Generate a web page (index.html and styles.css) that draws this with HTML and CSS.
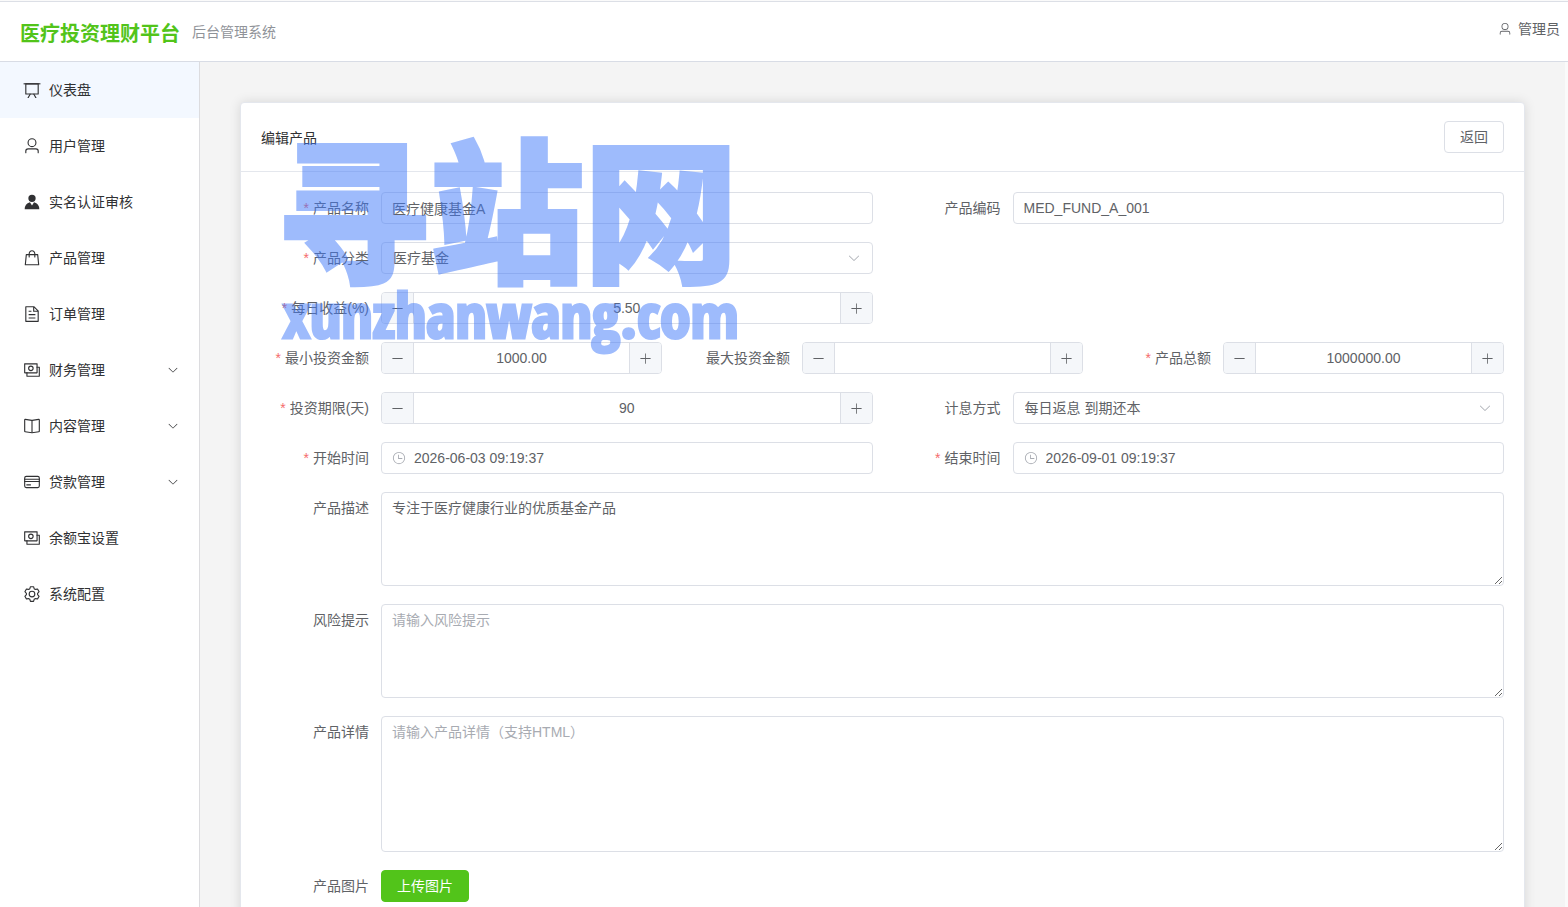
FILE: index.html
```html
<!DOCTYPE html>
<html lang="zh-CN">
<head>
    <meta charset="UTF-8">
    <meta name="viewport" content="width=device-width, initial-scale=1.0">
    <title>编辑产品</title>
    <link rel="stylesheet" href="styles.css">
</head>
<body>
    <!-- icon set -->
    <svg class="icon-defs" aria-hidden="true">
        <symbol id="i-board" viewBox="0 0 1024 1024"><path d="M32 128h960v64H32z"/><path d="M192 192v512h640V192zm-64-64h768v608a32 32 0 0 1-32 32H160a32 32 0 0 1-32-32z"/><path d="M322.176 960H248.32l144.64-250.56 55.424 32zm453.888 0h-73.856L576 741.44l55.424-32z"/></symbol>
        <symbol id="i-user" viewBox="0 0 1024 1024"><path d="M512 512a192 192 0 1 0 0-384 192 192 0 0 0 0 384m0 64a256 256 0 1 1 0-512 256 256 0 0 1 0 512m320 320v-96a96 96 0 0 0-96-96H288a96 96 0 0 0-96 96v96a32 32 0 1 1-64 0v-96a160 160 0 0 1 160-160h448a160 160 0 0 1 160 160v96a32 32 0 1 1-64 0"/></symbol>
        <symbol id="i-avatar" viewBox="0 0 1024 1024"><path d="M628.736 528.896A416 416 0 0 1 928 928H96a415.872 415.872 0 0 1 299.264-399.104L512 704zM720 304a208 208 0 1 1-416 0 208 208 0 0 1 416 0"/></symbol>
        <symbol id="i-goods" viewBox="0 0 1024 1024"><path d="M320 288v-22.336C320 154.688 405.504 64 512 64s192 90.688 192 201.664v22.4h131.072a32 32 0 0 1 31.808 28.8l57.6 576a32 32 0 0 1-31.808 35.2H131.328a32 32 0 0 1-31.808-35.2l57.6-576a32 32 0 0 1 31.808-28.8H320zm64 0h256v-22.336C640 189.248 582.272 128 512 128c-70.272 0-128 61.248-128 137.664v22.4zm-64 64H217.92l-51.2 512h690.56l-51.264-512H704v96a32 32 0 1 1-64 0v-96H384v96a32 32 0 0 1-64 0z"/></symbol>
        <symbol id="i-doc" viewBox="0 0 1024 1024"><path d="M832 384H576V128H192v768h640zm-26.496-64L640 154.496V320zM160 64h480l256 256v608a32 32 0 0 1-32 32H160a32 32 0 0 1-32-32V96a32 32 0 0 1 32-32m160 448h384v64H320zm0-192h160v64H320zm0 384h384v64H320z"/></symbol>
        <symbol id="i-money" viewBox="0 0 1024 1024"><path d="M256 640v192h640V384H768v-64h150.976c14.272 0 19.456 1.472 24.64 4.288a29.056 29.056 0 0 1 12.16 12.096c2.752 5.184 4.224 10.368 4.224 24.64v493.952c0 14.272-1.472 19.456-4.288 24.64a29.056 29.056 0 0 1-12.096 12.16c-5.184 2.752-10.368 4.224-24.64 4.224H233.024c-14.272 0-19.456-1.472-24.64-4.288a29.056 29.056 0 0 1-12.16-12.096c-2.688-5.184-4.224-10.368-4.224-24.576V640z"/><path d="M768 192H128v448h640zm64-22.976v493.952c0 14.272-1.472 19.456-4.288 24.64a29.056 29.056 0 0 1-12.096 12.16c-5.184 2.752-10.368 4.224-24.64 4.224H105.024c-14.272 0-19.456-1.472-24.64-4.288a29.056 29.056 0 0 1-12.16-12.096C65.536 682.432 64 677.248 64 663.04V169.024c0-14.272 1.472-19.456 4.288-24.64a29.056 29.056 0 0 1 12.096-12.16C85.568 129.536 90.752 128 104.96 128h685.952c14.272 0 19.456 1.472 24.64 4.288a29.056 29.056 0 0 1 12.16 12.096c2.752 5.184 4.224 10.368 4.224 24.64z"/><path d="M448 576a160 160 0 1 1 0-320 160 160 0 0 1 0 320m0-64a96 96 0 1 0 0-192 96 96 0 0 0 0 192"/></symbol>
        <symbol id="i-book" viewBox="0 0 1024 1024"><path d="m512 863.36 384-54.848v-638.72L525.568 222.72a96 96 0 0 1-27.136 0L128 169.792v638.72zM137.024 106.432l370.432 52.928a32 32 0 0 0 9.088 0l370.432-52.928A64 64 0 0 1 960 169.792v638.72a64 64 0 0 1-54.976 63.36l-388.48 55.488a32 32 0 0 1-9.088 0l-388.48-55.488A64 64 0 0 1 64 808.512v-638.72a64 64 0 0 1 73.024-63.36z"/><path d="M480 192h64v704h-64z"/></symbol>
        <symbol id="i-card" viewBox="0 0 1024 1024"><rect x="96" y="192" width="832" height="640" rx="90" fill="none" stroke="currentColor" stroke-width="64"/><path d="M64 320h896v64H64zm0 128h896v64H64zm128 192h256v64H192z"/></symbol>
        <symbol id="i-setting" viewBox="0 0 1024 1024"><path d="M600.704 64a32 32 0 0 1 30.464 22.208l35.2 109.376c14.784 7.232 28.928 15.36 42.432 24.512l112.384-24.192a32 32 0 0 1 34.432 15.36L944.32 364.8a32 32 0 0 1-4.032 37.504l-77.12 85.12a357.12 357.12 0 0 1 0 49.024l77.12 85.248a32 32 0 0 1 4.032 37.504l-88.704 153.6a32 32 0 0 1-34.432 15.296L708.8 803.904c-13.44 9.088-27.648 17.28-42.368 24.512l-35.264 109.376A32 32 0 0 1 600.704 960H423.296a32 32 0 0 1-30.464-22.208L357.696 828.48a351.616 351.616 0 0 1-42.56-24.64l-112.32 24.256a32 32 0 0 1-34.432-15.36L79.68 659.2a32 32 0 0 1 4.032-37.504l77.12-85.248a357.12 357.12 0 0 1 0-48.896l-77.12-85.248A32 32 0 0 1 79.68 364.8l88.704-153.6a32 32 0 0 1 34.432-15.296l112.32 24.256c13.568-9.152 27.776-17.408 42.56-24.64l35.2-109.312A32 32 0 0 1 423.232 64H600.64zm-23.424 64H446.72l-36.352 113.088-24.512 11.968a294.113 294.113 0 0 0-34.816 20.096l-22.656 15.36-116.224-25.088-65.28 113.152 79.68 88.192-1.92 27.136a293.12 293.12 0 0 0 0 40.192l1.92 27.136-79.808 88.192 65.344 113.152 116.224-25.024 22.656 15.296a294.113 294.113 0 0 0 34.816 20.096l24.512 11.968L446.72 896h130.688l36.48-113.152 24.448-11.904a288.282 288.282 0 0 0 34.752-20.096l22.592-15.296 116.288 25.024 65.28-113.152-79.744-88.192 1.92-27.136a293.12 293.12 0 0 0 0-40.256l-1.92-27.136 79.808-88.128-65.344-113.152-116.288 24.96-22.592-15.232a287.616 287.616 0 0 0-34.752-20.096l-24.448-11.904L577.344 128zM512 320a192 192 0 1 1 0 384 192 192 0 0 1 0-384m0 64a128 128 0 1 0 0 256 128 128 0 0 0 0-256"/></symbol>
        <symbol id="i-down" viewBox="0 0 1024 1024"><path d="M831.872 340.864 512 652.672 192.128 340.864a30.592 30.592 0 0 0-42.752 0 29.12 29.12 0 0 0 0 41.6L489.664 714.24a32 32 0 0 0 44.672 0l340.288-331.712a29.12 29.12 0 0 0 0-41.728 30.592 30.592 0 0 0-42.752 0z"/></symbol>
        <symbol id="i-minus" viewBox="0 0 1024 1024"><path d="M128 544h768a32 32 0 1 0 0-64H128a32 32 0 0 0 0 64"/></symbol>
        <symbol id="i-plus" viewBox="0 0 1024 1024"><path d="M480 480V128a32 32 0 0 1 64 0v352h352a32 32 0 1 1 0 64H544v352a32 32 0 1 1-64 0V544H128a32 32 0 0 1 0-64z"/></symbol>
        <symbol id="i-clock" viewBox="0 0 1024 1024"><path d="M512 896a384 384 0 1 0 0-768 384 384 0 0 0 0 768m0 64a448 448 0 1 1 0-896 448 448 0 0 1 0 896"/><path d="M480 256a32 32 0 0 1 32 32v256a32 32 0 0 1-64 0V288a32 32 0 0 1 32-32"/><path d="M480 512h256q32 0 32 32t-32 32H480q-32 0-32-32t32-32"/></symbol>
    </svg>

    <header class="header">
        <div class="brand">
            <h1>医疗投资理财平台</h1>
            <span>后台管理系统</span>
        </div>
        <div class="user">
            <svg><use href="#i-user"/></svg>
            <span>管理员</span>
        </div>
    </header>

    <div class="layout">
        <nav class="sidebar">
            <a href="#" class="active"><svg><use href="#i-board"/></svg>仪表盘</a>
            <a href="#"><svg><use href="#i-user"/></svg>用户管理</a>
            <a href="#"><svg><use href="#i-avatar"/></svg>实名认证审核</a>
            <a href="#"><svg><use href="#i-goods"/></svg>产品管理</a>
            <a href="#"><svg><use href="#i-doc"/></svg>订单管理</a>
            <a href="#"><svg><use href="#i-money"/></svg>财务管理<svg class="arrow"><use href="#i-down"/></svg></a>
            <a href="#"><svg><use href="#i-book"/></svg>内容管理<svg class="arrow"><use href="#i-down"/></svg></a>
            <a href="#"><svg><use href="#i-card"/></svg>贷款管理<svg class="arrow"><use href="#i-down"/></svg></a>
            <a href="#"><svg><use href="#i-money"/></svg>余额宝设置</a>
            <a href="#"><svg><use href="#i-setting"/></svg>系统配置</a>
        </nav>

        <main class="main">
            <section class="card">
                <div class="card-header">
                    <h2>编辑产品</h2>
                    <button type="button" class="btn">返回</button>
                </div>
                <form class="product-form">
                    <div class="row cols-2">
                        <div class="item">
                            <label for="name" class="required">产品名称</label>
                            <input type="text" id="name" class="field" value="医疗健康基金A">
                        </div>
                        <div class="item">
                            <label for="code">产品编码</label>
                            <input type="text" id="code" class="field" value="MED_FUND_A_001">
                        </div>
                    </div>

                    <div class="row cols-2">
                        <div class="item">
                            <label for="category" class="required">产品分类</label>
                            <div class="select">
                                <select id="category" class="field"><option>医疗基金</option></select>
                                <svg><use href="#i-down"/></svg>
                            </div>
                        </div>
                    </div>

                    <div class="row cols-2">
                        <div class="item">
                            <label for="rate" class="required">每日收益(%)</label>
                            <div class="number">
                                <button type="button" aria-label="减少"><svg><use href="#i-minus"/></svg></button>
                                <input type="text" inputmode="decimal" id="rate" value="5.50">
                                <button type="button" aria-label="增加"><svg><use href="#i-plus"/></svg></button>
                            </div>
                        </div>
                    </div>

                    <div class="row cols-3">
                        <div class="item">
                            <label for="min" class="required">最小投资金额</label>
                            <div class="number">
                                <button type="button" aria-label="减少"><svg><use href="#i-minus"/></svg></button>
                                <input type="text" inputmode="decimal" id="min" value="1000.00">
                                <button type="button" aria-label="增加"><svg><use href="#i-plus"/></svg></button>
                            </div>
                        </div>
                        <div class="item">
                            <label for="max">最大投资金额</label>
                            <div class="number">
                                <button type="button" aria-label="减少"><svg><use href="#i-minus"/></svg></button>
                                <input type="text" inputmode="decimal" id="max">
                                <button type="button" aria-label="增加"><svg><use href="#i-plus"/></svg></button>
                            </div>
                        </div>
                        <div class="item">
                            <label for="total" class="required">产品总额</label>
                            <div class="number">
                                <button type="button" aria-label="减少"><svg><use href="#i-minus"/></svg></button>
                                <input type="text" inputmode="decimal" id="total" value="1000000.00">
                                <button type="button" aria-label="增加"><svg><use href="#i-plus"/></svg></button>
                            </div>
                        </div>
                    </div>

                    <div class="row cols-2">
                        <div class="item">
                            <label for="days" class="required">投资期限(天)</label>
                            <div class="number">
                                <button type="button" aria-label="减少"><svg><use href="#i-minus"/></svg></button>
                                <input type="text" inputmode="numeric" id="days" value="90">
                                <button type="button" aria-label="增加"><svg><use href="#i-plus"/></svg></button>
                            </div>
                        </div>
                        <div class="item">
                            <label for="interest">计息方式</label>
                            <div class="select">
                                <select id="interest" class="field"><option>每日返息 到期还本</option></select>
                                <svg><use href="#i-down"/></svg>
                            </div>
                        </div>
                    </div>

                    <div class="row cols-2">
                        <div class="item">
                            <label for="start" class="required">开始时间</label>
                            <div class="field date">
                                <svg><use href="#i-clock"/></svg>
                                <input type="text" id="start" value="2026-06-03 09:19:37">
                            </div>
                        </div>
                        <div class="item">
                            <label for="end" class="required">结束时间</label>
                            <div class="field date">
                                <svg><use href="#i-clock"/></svg>
                                <input type="text" id="end" value="2026-09-01 09:19:37">
                            </div>
                        </div>
                    </div>

                    <div class="item">
                        <label for="desc">产品描述</label>
                        <textarea id="desc" class="field" rows="4">专注于医疗健康行业的优质基金产品</textarea>
                    </div>
                    <div class="item">
                        <label for="risk">风险提示</label>
                        <textarea id="risk" class="field" rows="4" placeholder="请输入风险提示"></textarea>
                    </div>
                    <div class="item">
                        <label for="detail">产品详情</label>
                        <textarea id="detail" class="field" rows="6" placeholder="请输入产品详情（支持HTML）"></textarea>
                    </div>
                    <div class="item">
                        <label for="upload">产品图片</label>
                        <button type="button" id="upload" class="btn btn-primary">上传图片</button>
                    </div>
                </form>
            </section>
        </main>
    </div>

    <div class="watermark" aria-hidden="true">
        <div class="watermark-name">寻站网</div>
        <div class="watermark-url">xunzhanwang.com</div>
    </div>
</body>
</html>
```
FILE: styles.css
```css
* {
    box-sizing: border-box;
}

body {
    margin: 0;
    padding-top: 1px;
    height: 100vh;
    display: flex;
    flex-direction: column;
    overflow: hidden;
    background-color: #fafafa;
    color: #303133;
    font-family: "Liberation Sans", "Noto Sans CJK SC", sans-serif;
    font-size: 14px;
    line-height: 20px;
}

svg {
    fill: currentColor;
    flex-shrink: 0;
}

.icon-defs {
    position: absolute;
    width: 0;
    height: 0;
}

input,
select,
textarea,
button {
    font: inherit;
    color: #606266;
}

/* header */
.header {
    display: flex;
    justify-content: space-between;
    align-items: center;
    flex-shrink: 0;
    height: 61px;
    padding: 0 8px 0 20px;
    background-color: #fff;
    border-top: 1px solid #dcdfe6;
    border-bottom: 1px solid #d8dce5;
}

.brand {
    display: flex;
    align-items: center;
    gap: 12px;
    color: #909399;
}

.brand h1 {
    margin: 0;
    padding-top: 4px;
    font-size: 20px;
    line-height: 28px;
    color: #52c41a;
}

.user {
    display: flex;
    align-items: center;
    gap: 6px;
    padding-bottom: 6px;
    color: #606266;
}

.user svg {
    width: 14px;
    height: 14px;
}

.layout {
    display: flex;
    flex: 1;
    min-height: 0;
}

/* sidebar */
.sidebar {
    width: 200px;
    flex-shrink: 0;
    background-color: #fff;
    border-right: 1px solid #dcdcdf;
}

.sidebar a {
    display: flex;
    align-items: center;
    gap: 8px;
    height: 56px;
    padding: 0 20px 0 23px;
    color: #303133;
    text-decoration: none;
}

.sidebar a.active {
    background-color: #f3f8ff;
}

.sidebar svg {
    width: 18px;
    height: 18px;
}

.sidebar .arrow {
    width: 12px;
    height: 12px;
    margin-left: auto;
}

/* content */
.main {
    flex: 1;
    min-width: 0;
    margin-right: 3px;
    padding: 40px;
    overflow-y: auto;
    scrollbar-width: none;
    background-color: #f4f4f4;
}

.card {
    background-color: #fff;
    border: 1px solid #e4e7ed;
    border-radius: 4px;
    box-shadow: 0 0 12px rgba(0, 0, 0, 0.12);
}

.card-header {
    display: flex;
    justify-content: space-between;
    align-items: center;
    padding: 18px 20px;
    border-bottom: 1px solid #e4e7ed;
}

.card-header h2 {
    margin: 0;
    font-size: 14px;
    font-weight: normal;
    line-height: normal;
}

.btn {
    height: 32px;
    padding: 0 15px;
    background-color: #fff;
    border: 1px solid #dcdfe6;
    border-radius: 4px;
    cursor: pointer;
}

.btn-primary {
    background-color: #52c41a;
    border-color: #52c41a;
    color: #fff;
}

/* form */
.product-form {
    display: flex;
    flex-direction: column;
    gap: 18px;
    padding: 20px 20px 40px;
}

.row {
    display: grid;
    gap: 20px;
}

.cols-2 {
    grid-template-columns: repeat(2, 1fr);
}

.cols-3 {
    grid-template-columns: repeat(3, 1fr);
}

.item {
    display: flex;
    align-items: flex-start;
    min-width: 0;
}

.item label {
    width: 120px;
    flex-shrink: 0;
    padding-right: 12px;
    line-height: 32px;
    text-align: right;
    color: #606266;
}

.item label.required::before {
    content: "*";
    margin-right: 4px;
    color: #f56c6c;
}

.field {
    flex: 1;
    width: 100%;
    min-width: 0;
    height: 32px;
    padding: 0 10px;
    background-color: #fff;
    border: 1px solid #dcdfe6;
    border-radius: 4px;
    outline: none;
}

textarea.field {
    height: auto;
    padding: 5px 10px 3px;
    line-height: 21px;
    resize: vertical;
}

.field::placeholder {
    color: #a8abb2;
}

.select {
    position: relative;
    flex: 1;
}

.select select {
    display: block;
    padding: 0 11px;
    appearance: none;
}

.select svg {
    position: absolute;
    top: 9px;
    right: 12px;
    width: 14px;
    height: 14px;
    color: #a8abb2;
    pointer-events: none;
}

.date {
    display: flex;
    align-items: center;
    gap: 8px;
}

.date svg {
    width: 14px;
    height: 14px;
    color: #a8abb2;
}

.date input {
    flex: 1;
    min-width: 0;
    padding: 0;
    border: none;
    outline: none;
}

.number {
    flex: 1;
    min-width: 0;
    display: grid;
    grid-template-columns: 32px 1fr 32px;
    height: 32px;
    border: 1px solid #dcdfe6;
    border-radius: 4px;
    overflow: hidden;
}

.number input {
    min-width: 0;
    padding: 0 10px;
    border: none;
    outline: none;
    text-align: center;
}

.number button {
    display: flex;
    align-items: center;
    justify-content: center;
    padding: 0;
    background-color: #f5f7fa;
    border: none;
    cursor: pointer;
}

.number button:first-child {
    border-right: 1px solid #dcdfe6;
}

.number button:last-child {
    border-left: 1px solid #dcdfe6;
}

.number svg {
    width: 13px;
    height: 13px;
}

/* site watermark over the page */
.watermark {
    position: absolute;
    top: 129px;
    left: 276px;
    color: #3f79f9;
    opacity: 0.5;
    pointer-events: none;
    white-space: nowrap;
}

.watermark-name {
    font-family: "Noto Sans CJK SC", sans-serif;
    font-size: 154px;
    font-weight: 900;
    line-height: 150px;
    -webkit-text-stroke: 4px #3f79f9;
}

.watermark-url {
    padding-left: 7px;
    font-family: "Open Sans Condensed", "Roboto Condensed", sans-serif;
    font-size: 62px;
    font-weight: 900;
    line-height: 70px;
    -webkit-text-stroke: 3px #3f79f9;
}
```
